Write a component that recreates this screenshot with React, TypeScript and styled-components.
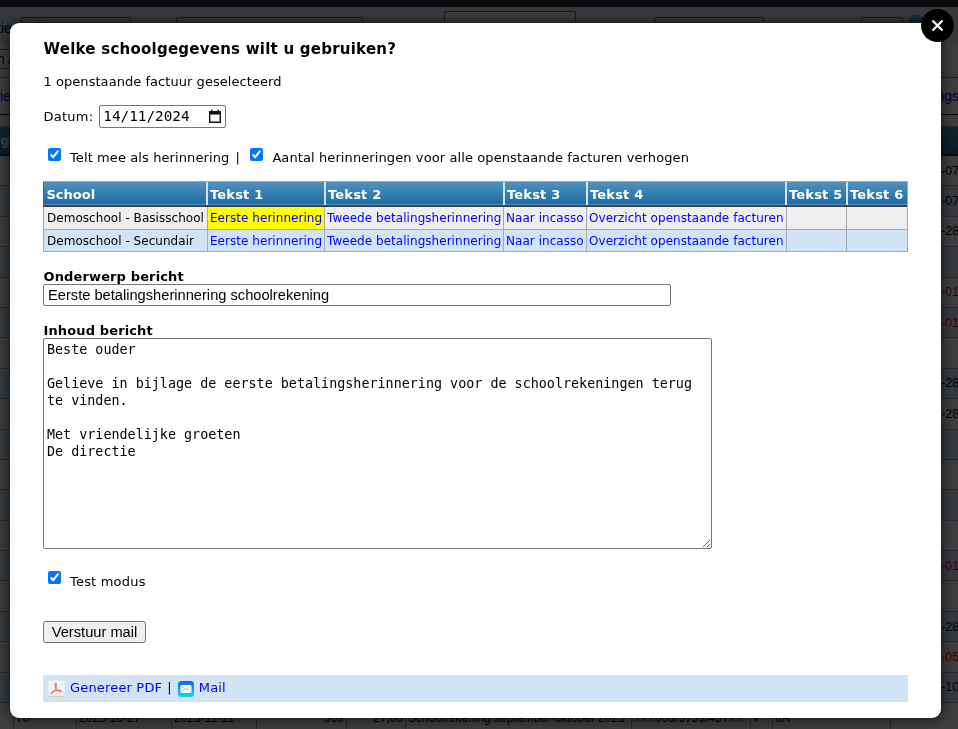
import React from "react";
import styled, { createGlobalStyle } from "styled-components";

const verdana = `Verdana, "DejaVu Sans", sans-serif`;
const arial = `"Liberation Sans", Arial, sans-serif`;
const mono = `Consolas, "DejaVu Sans Mono", monospace`;

const GlobalStyle = createGlobalStyle`
  * { box-sizing: border-box; }
  html, body { margin: 0; height: 100%; overflow: hidden; background: #eee; }
  #root { height: 100%; }
  body { font: 13px/16px ${verdana}; color: #000; }
`;

/* ---------- page behind the dialog ---------- */
const Page = styled.div`
  display: flex;
  flex-direction: column;
  height: 729px;
  overflow: hidden;
  font: 14px/18px ${arial};
  white-space: nowrap;
`;
const TopBar = styled.div`
  height: 7px;
  flex: none;
  background: #2a2a2a;
`;
const FilterBar = styled.div`
  display: flex;
  align-items: flex-start;
  flex: none;
  height: 35px;
  padding-top: 5px;
  background: #d1e4f5;
`;
const FilterLabel = styled.span<{ $w: number }>`
  width: ${(p) => p.$w}px;
  padding-top: 7px;
  flex: none;
  text-indent: -3px;
`;
const FilterBox = styled.span<{ $w: number; $up?: boolean }>`
  width: ${(p) => p.$w}px;
  height: 22px;
  margin-top: ${(p) => (p.$up ? -1 : 5)}px;
  padding: 1px 6px;
  flex: none;
  border: 1px solid #666;
  border-radius: 2px;
  background: ${(p) => (p.$up ? "#eee" : "#e2e2e2")};
`;
const Badge = styled.span`
  width: 16px;
  height: 16px;
  margin: 3px 0 0 5px;
  border-radius: 50%;
  background: #3fb2d8;
`;
const SearchRow = styled.div`
  display: flex;
  flex: none;
  height: 36px;
  padding-top: 7px;
  border-bottom: 1px solid #888;
`;
const SearchBox = styled.div`
  width: 130px;
  height: 20px;
  border: 1px solid #777;
  border-left: 0;
  background: #eee;
  text-indent: -3px;
`;
const LinkRow = styled.div`
  display: flex;
  justify-content: space-between;
  align-items: center;
  flex: none;
  height: 37px;
  margin-right: -1px;
  border-bottom: 1px solid #000;
  color: #00f;
`;
const ListHead = styled.div`
  flex: none;
  height: 30px;
  margin-top: 11px;
  padding-top: 6px;
  border-top: 1px solid #aaa;
  border-bottom: 2px solid #333;
  background: linear-gradient(#5292be, #1a6ca5);
  color: #fff;
  font: bold 13px/16px ${verdana};
  text-indent: -9px;
`;
const ListRow = styled.div<{ $odd: boolean; $red?: boolean }>`
  display: flex;
  justify-content: flex-end;
  align-items: center;
  flex: none;
  height: 30.4px;
  margin-right: -1px;
  border-bottom: 1px solid #aaa;
  background: ${(p) => (p.$odd ? "#d1e4f5" : "#eee")};
  color: ${(p) => (p.$red ? "#f00000" : "#000")};
  font-size: 12.3px;
`;
const LastRow = styled.div`
  display: grid;
  grid-template-columns: 14px 63px 95px 85px 90px 59px 226px 119px 22px 118px 1fr;
  flex: none;
  height: 40px;
  background: #eee;
  font-size: 12px;
`;
const LastCell = styled.span<{ $right?: boolean }>`
  padding: 6px 2px;
  border-right: 1px solid #aaa;
  text-align: ${(p) => (p.$right ? "right" : "left")};
`;

/* ---------- dialog ---------- */
const Overlay = styled.div`
  position: fixed;
  inset: 0;
  padding: 23px 17px 11px 10px;
  background: rgba(0, 0, 0, 0.75);
`;
const Dialog = styled.div`
  position: relative;
  display: flex;
  flex-direction: column;
  width: 931px;
  height: 695px;
  padding: 17px 33px 0;
  border-radius: 9px;
  background: #fff;
  box-shadow: 0 0 12px rgba(0, 0, 0, 0.8);
  letter-spacing: 0.08px;
  white-space: nowrap;
`;
const Close = styled.button`
  position: absolute;
  top: -14px;
  right: -13px;
  width: 33px;
  height: 33px;
  padding: 0;
  border: 0;
  border-radius: 50%;
  background: #000;
  svg { display: block; }
`;
const Title = styled.h1`
  margin: 0;
  padding-left: 0.5px;
  height: 34px;
  font: bold 15px/18px ${verdana};
  letter-spacing: 0.24px;
`;
const Line = styled.p`
  margin: 0;
  padding-left: 0.5px;
  height: 31px;
  letter-spacing: 0.05px;
`;
const DateRow = styled.label`
  display: flex;
  align-items: center;
  gap: 6px;
  height: 23px;
  padding-left: 0.5px;
  letter-spacing: 0.25px;
`;
const DateBox = styled.span`
  display: flex;
  justify-content: space-between;
  align-items: center;
  width: 127px;
  height: 23px;
  padding: 0 4px 2px 3px;
  border: 1px solid #767676;
  border-radius: 2px;
  font: 14.4px/20px ${mono};
  letter-spacing: -0.05px;
  svg { margin: 2px -1px 0 0; }
`;
const CheckRow = styled.div<{ $top: number }>`
  display: flex;
  align-items: flex-start;
  height: 20px;
  margin-top: ${(p) => p.$top}px;
`;
const Check = styled.input.attrs({ type: "checkbox" })`
  width: 13px;
  height: 13px;
  margin: 0 9px 0 5px;
`;
const CheckText = styled.span<{ $down?: boolean }>`
  padding-top: ${(p) => (p.$down ? 3 : 2)}px;
  letter-spacing: ${(p) => (p.$down ? 0.2 : 0.1)}px;
`;
const Divider = styled.span`
  width: 10px;
  margin-left: 6px;
  padding-top: 2px;
`;
const TextTable = styled.div`
  width: 865px;
  margin-top: 13px;
  border-right: 1px solid #aaa;
`;
const HeadRow = styled.div`
  display: grid;
  grid-template-columns: 163px 118px 179px 83px 199px 61px 61px;
  height: 26px;
  border-top: 1px solid #aaa;
  border-bottom: 2px solid #404048;
  background: linear-gradient(#5292be, #1a6ca5 22px, #5292be 22px);
`;
const HeadCell = styled.span`
  padding: 4px 0 0 2px;
  border-left: 2px solid #d1e4f5;
  color: #fff;
  font: bold 13px/17px ${verdana};
  letter-spacing: 0.18px;
  &:first-child { border-left: 1px solid #1a6ca5; padding-left: 2.5px; letter-spacing: 0; }
`;
const BodyRow = styled.div<{ $blue?: boolean }>`
  display: grid;
  grid-template-columns: 164px 117px 179px 83px 200px 60px 61px;
  height: ${(p) => (p.$blue ? 22 : 23)}px;
  border-bottom: 1px solid #aaa;
  background: ${(p) => (p.$blue ? "#d1e4f5" : "#eee")};
`;
const BodyCell = styled.span<{ $on?: boolean; $link?: boolean }>`
  padding: ${(p) => (p.$link ? "3px 0 0 2px" : "3px 0 0 3px")};
  border-left: 1px solid #aaa;
  background: ${(p) => (p.$on ? "#ff0" : "none")};
  color: ${(p) => (p.$link ? "#00f" : "#000")};
  font: 12px/17px ${verdana};
  letter-spacing: 0.04px;
`;
const FieldLabel = styled.label<{ $top: number }>`
  height: ${(p) => 32 - p.$top}px;
  margin-top: ${(p) => p.$top}px;
  padding-left: 0.5px;
  font-weight: bold;
  letter-spacing: 0.13px;
`;
const Subject = styled.input`
  width: 628px;
  height: 22px;
  padding: 0 4px;
  flex: none;
  border: 1px solid #767676;
  border-radius: 2px;
  font: 14.67px/18px ${arial};
`;
const Message = styled.textarea`
  display: block;
  flex: none;
  width: 669px;
  height: 211px;
  padding: 2px 3px;
  border: 1px solid #767676;
  border-radius: 2px;
  font: 13.4px/17px ${mono};
`;
const Send = styled.button`
  width: 103px;
  height: 22px;
  margin-top: 30px;
  padding: 0;
  flex: none;
  border: 1px solid #767676;
  border-radius: 2.5px;
  background: #efefef;
  color: #000;
  font: 14.67px/18px ${arial};
`;
const ActionBar = styled.div`
  display: flex;
  align-items: center;
  width: 865px;
  height: 27px;
  margin-top: 32px;
  padding-left: 5px;
  background: #d1e4f5;
  letter-spacing: 0.17px;
  svg { flex: none; margin-right: 5px; }
`;
const ActionLink = styled.a`
  margin-top: -2px;
  color: #00f;
`;
const Bar = styled.span`
  margin: -2px 6px 0 5px;
`;

const rows: [string, boolean?][] = [
  ["-07"], ["-07"], ["-28"], [""], ["-01", true], ["-01", true], [""], ["-28"], ["-28"],
  [""], [""], [""], [""], ["-01", true], [""], ["-28"], ["-05", true], ["-10"],
];
const headers = ["School", "Tekst 1", "Tekst 2", "Tekst 3", "Tekst 4", "Tekst 5", "Tekst 6"];
const schools = ["Demoschool - Basisschool", "Demoschool - Secundair"];
const texts = ["Eerste herinnering", "Tweede betalingsherinnering", "Naar incasso", "Overzicht openstaande facturen", "", ""];
const body = `Beste ouder

Gelieve in bijlage de eerste betalingsherinnering voor de schoolrekeningen terug te vinden.

Met vriendelijke groeten
De directie`;

const CalendarIcon = () => (
  <svg width="14" height="15" viewBox="0 0 14 15">
    <path d="M1.700 3v10.300h10.600V3" fill="none" stroke="#111" strokeWidth="1.400" />
    <path d="M1 2h12v3.500H1zM3 .8h1.500V3H3zM9.500.8H11V3H9.500z" fill="#111" />
  </svg>
);
const PdfIcon = () => (
  <svg width="17" height="17" viewBox="0 0 17 17">
    <rect x=".5" y=".5" width="16" height="16" fill="#f4f2f0" />
    <path d="M.5 16.300h16" stroke="#c9c9c9" />
    <path d="M7.500 3c1.500-.3 .8 3.300 0 5.600C6.300 11.700 3.900 14.200 3 13.500c-.8-1.100 4.400-3.300 7.600-3.200 2.800.1 4 1.300 2.400 1.600-2 .3-5.800-4-5.900-7 0-1 .1-1.700.4-1.900z" fill="none" stroke="#e8594a" strokeWidth="1" />
  </svg>
);
const MailIcon = () => (
  <svg width="16" height="16" viewBox="0 0 16 16">
    <defs>
      <linearGradient id="mailFill" x1="0" y1="0" x2="0" y2="1">
        <stop offset="0" stopColor="#1c5cf0" />
        <stop offset="1" stopColor="#1ad5fd" />
      </linearGradient>
    </defs>
    <rect width="16" height="16" rx="3.600" fill="url(#mailFill)" />
    <rect x="2.500" y="4" width="11" height="8" rx="1.300" fill="#fff" />
    <path d="M3 4.600l5 4.200 5-4.200M3 11.500l3.500-3.500M13 11.500L9.500 8" fill="none" stroke="#69b6ee" strokeWidth=".8" />
  </svg>
);

export default function App() {
  return (
    <>
      <GlobalStyle />
      <Page>
        <TopBar />
        <FilterBar>
          <FilterLabel $w={21}>tie</FilterLabel>
          <FilterBox $w={110}>Alle</FilterBox>
          <FilterLabel $w={45} />
          <FilterBox $w={187} />
          <FilterLabel $w={81} />
          <FilterBox $w={132} $up />
          <FilterLabel $w={78} />
          <FilterBox $w={110} />
          <FilterLabel $w={97} />
          <FilterBox $w={42} />
          <Badge />
        </FilterBar>
        <SearchRow><SearchBox>n A</SearchBox></SearchRow>
        <LinkRow><span>ie</span><span>ngs</span></LinkRow>
        <ListHead>ng</ListHead>
        {rows.map(([text, red], i) => (
          <ListRow key={i} $odd={i % 2 === 1} $red={red}>{text}</ListRow>
        ))}
        <LastRow>
          <LastCell />
          <LastCell>70</LastCell>
          <LastCell>2025-10-27</LastCell>
          <LastCell>2025-11-11</LastCell>
          <LastCell $right>369</LastCell>
          <LastCell $right>27,00</LastCell>
          <LastCell>Schoolrekening september-oktober 2025</LastCell>
          <LastCell>+++003/5739/43+++</LastCell>
          <LastCell>✓</LastCell>
          <LastCell>6A</LastCell>
          <span />
        </LastRow>
      </Page>
      <Overlay>
        <Dialog role="dialog">
          <Close aria-label="Sluiten">
            <svg width="33" height="33" viewBox="0 0 33 33">
              <path d="M11.500 11.500l10 10M21.500 11.500l-10 10" stroke="#fff" strokeWidth="2.300" />
            </svg>
          </Close>
          <Title>Welke schoolgegevens wilt u gebruiken?</Title>
          <Line>1 openstaande factuur geselecteerd</Line>
          <DateRow>
            Datum:
            <DateBox>14/11/2024<CalendarIcon /></DateBox>
          </DateRow>
          <CheckRow $top={20}>
            <Check defaultChecked />
            <CheckText>Telt mee als herinnering</CheckText>
            <Divider>|</Divider>
            <Check defaultChecked />
            <CheckText>Aantal herinneringen voor alle openstaande facturen verhogen</CheckText>
          </CheckRow>
          <TextTable>
            <HeadRow>{headers.map((h) => <HeadCell key={h}>{h}</HeadCell>)}</HeadRow>
            {schools.map((school, r) => (
              <BodyRow key={school} $blue={r === 1}>
                <BodyCell>{school}</BodyCell>
                {texts.map((t, c) => (
                  <BodyCell key={c} $link $on={r === 0 && c === 0}>{t}</BodyCell>
                ))}
              </BodyRow>
            ))}
          </TextTable>
          <FieldLabel $top={17}>Onderwerp bericht</FieldLabel>
          <Subject defaultValue="Eerste betalingsherinnering schoolrekening" />
          <FieldLabel $top={17}>Inhoud bericht</FieldLabel>
          <Message defaultValue={body} spellCheck={false} />
          <CheckRow $top={22}>
            <Check defaultChecked />
            <CheckText $down>Test modus</CheckText>
          </CheckRow>
          <Send>Verstuur mail</Send>
          <ActionBar>
            <PdfIcon />
            <ActionLink>Genereer PDF</ActionLink>
            <Bar>|</Bar>
            <MailIcon />
            <ActionLink>Mail</ActionLink>
          </ActionBar>
        </Dialog>
      </Overlay>
    </>
  );
}
